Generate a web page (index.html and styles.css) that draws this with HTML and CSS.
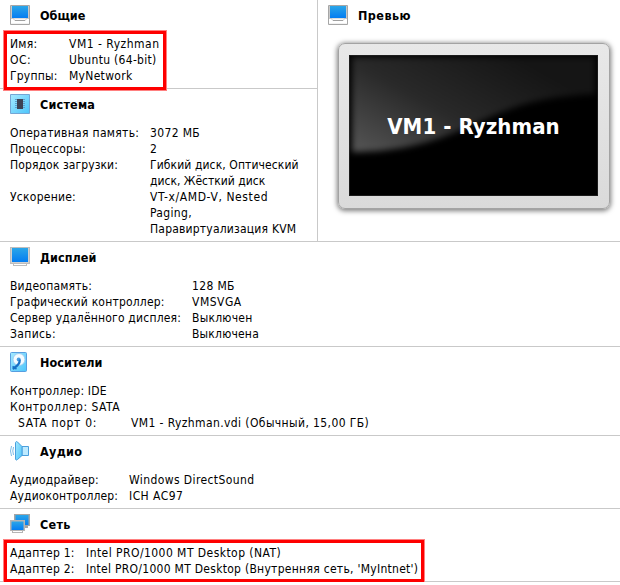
FILE: index.html
```
<!DOCTYPE html>
<html lang="ru">
<head>
<meta charset="utf-8">
<title>VM1 - Ryzhman</title>
<link rel="stylesheet" href="styles.css">
</head>
<body>
<svg class="defs" width="0" height="0" aria-hidden="true">
  <defs>
    <linearGradient id="blue" x1="0" y1="0" x2="0" y2="1"><stop offset="0" stop-color="#2ba6e8"/><stop offset="1" stop-color="#047df2"/></linearGradient>
    <linearGradient id="cyan" x1="0" y1="0" x2="1" y2="1"><stop offset="0" stop-color="#a5e9ff"/><stop offset="1" stop-color="#4cc5fb"/></linearGradient>
    <symbol id="computer" viewBox="0 0 20 20">
      <path d="M.5.5h19v19H.5z" fill="#f2f2f2" stroke="#a6a6a6"/>
      <path d="M1 1h18v13H1z" fill="#c9c9c9"/>
      <path d="M2 1h16v12H2z" fill="url(#blue)"/>
      <path d="M1 14h18v4H1z" fill="#fff"/>
      <path d="M4 13.5h12v1H4z" fill="#eee"/>
      <path d="M4 14.5l1 1h10l1-1" fill="none" stroke="#a0a0a0"/>
    </symbol>
    <symbol id="monitor" viewBox="0 0 20 20">
      <path d="M0 0h20v17h-3v2H3v-2H0z" fill="#bdbdbd"/>
      <path d="M1 1h18v15H1z" fill="#d0d0d0"/>
      <path d="M2 1h16v14H2z" fill="url(#blue)"/>
      <path d="M4 17h12v1H4z" fill="#fff"/>
    </symbol>
  </defs>
</svg>

<main class="details">
  <div class="top">
    <div class="left">
      <section class="section first c59">
        <h2 class="head"><svg class="icon"><use href="#computer"/></svg><span>Общие</span></h2>
        <dl class="rows boxed box-name">
          <dt class="s30">Имя:</dt><dd class="s50">VM1 - Ryzhman</dd>
          <dt class="s50">ОС:</dt><dd class="s30">Ubuntu (64-bit)</dd>
          <dt class="s20">Группы:</dt><dd class="s30">MyNetwork</dd>
        </dl>
      </section>
      <section class="section c140">
        <h2 class="head s20"><svg class="icon" viewBox="0 0 20 20">
          <path d="M.5.5h19v19H.5z" fill="url(#cyan)" stroke="#74a6d5"/>
          <path d="M5 5.500h10M5 7.500h10M5 9.500h10M5 11.500h10M5 13.500h10" stroke="#5d9dc8"/>
          <path d="M7 5h6v10H7z" fill="#3d4254"/>
        </svg><span>Система</span></h2>
        <dl class="rows">
          <dt class="s30">Оперативная память:</dt><dd class="s35">3072 МБ</dd>
          <dt class="s25">Процессоры:</dt><dd>2</dd>
          <dt class="s10">Порядок загрузки:</dt><dd><span class="s10">Гибкий диск, Оптический</span><br>диск, Жёсткий диск</dd>
          <dt class="s25">Ускорение:</dt><dd><span class="s60">VT-x/AMD-V, Nested</span><br><span class="s35">Paging,</span><br><span class="s20">Паравиртуализация KVM</span></dd>
        </dl>
      </section>
    </div>
    <section class="section first preview">
      <h2 class="head s45"><svg class="icon"><use href="#computer"/></svg><span>Превью</span></h2>
      <div class="frame">
        <div class="screen">
          <svg class="glare" viewBox="0 0 249 141">
            <defs>
              <linearGradient id="shine" gradientUnits="userSpaceOnUse" x1="10" y1="97" x2="88" y2="-42"><stop offset="0" stop-color="#545454"/><stop offset=".48" stop-color="#292929"/><stop offset="1" stop-color="#151515"/></linearGradient>
              <filter id="soft" x="-10%" y="-10%" width="120%" height="120%" color-interpolation-filters="sRGB"><feGaussianBlur stdDeviation="3"/></filter>
            </defs>
            <path d="M3 2H246V39C185 42 160 53 121 71C81 89 47 97 3 97z" fill="url(#shine)" filter="url(#soft)"/>
          </svg>
          <span class="screen-name">VM1 - Ryzhman</span>
        </div>
      </div>
    </section>
  </div>

  <section class="section c182">
    <h2 class="head s05"><svg class="icon"><use href="#monitor"/></svg><span>Дисплей</span></h2>
    <dl class="rows">
      <dt class="s20">Видеопамять:</dt><dd class="s35">128 МБ</dd>
      <dt class="s20">Графический контроллер:</dt><dd class="s50">VMSVGA</dd>
      <dt class="s20">Сервер удалённого дисплея:</dt><dd class="s25">Выключен</dd>
      <dt class="s35">Запись:</dt><dd class="s20">Выключена</dd>
    </dl>
  </section>

  <section class="section c121">
    <h2 class="head s05"><svg class="icon" viewBox="0 0 20 20">
      <rect x=".5" y=".5" width="16" height="19" rx="1" fill="url(#cyan)" stroke="#579ee0"/>
      <circle cx="9" cy="7.500" r="6" fill="#f4fbff" stroke="#9bcdf2"/>
      <circle cx="8.700" cy="7.500" r="2" fill="#4b9fe2"/>
      <path d="M9.700 8.500C10 12 6.500 14.500 3.500 16.500" fill="none" stroke="#1770c6" stroke-width="2.200" stroke-linecap="round"/>
      <path d="M2.500 14.500l4 2.500" stroke="#1770c6" stroke-width="1.500"/>
    </svg><span>Носители</span></h2>
    <dl class="rows">
      <dt class="wide s20">Контроллер: IDE</dt>
      <dt class="wide s50">Контроллер: SATA</dt>
      <dt class="sub s70">SATA порт 0:</dt><dd class="s40">VM1 - Ryzhman.vdi (Обычный, 15,00 ГБ)</dd>
    </dl>
  </section>

  <section class="section c119">
    <h2 class="head s30"><svg class="icon" viewBox="0 0 20 20">
      <path d="M12 5.500h6.500v9H12z" fill="#bdeaff" stroke="#4a9fdd"/>
      <path d="M5.500 1.500C6 .3 7 .3 7.500 1l4.500 4.500v9L7.500 18.500C6.500 19.500 5.500 19 5.500 18z" fill="url(#cyan)" stroke="#4a9fdd"/>
      <path d="M3.500 6Q2 10 3.500 14M1.500 5Q-.5 10 1.500 15" fill="none" stroke="#7bbbe6"/>
    </svg><span>Аудио</span></h2>
    <dl class="rows">
      <dt class="s20">Аудиодрайвер:</dt><dd class="s40">Windows DirectSound</dd>
      <dt class="s15">Аудиоконтроллер:</dt><dd class="s45">ICH AC97</dd>
    </dl>
  </section>

  <section class="section last c76">
    <h2 class="head s25"><svg class="icon" viewBox="0 0 20 20">
      <path d="M4 0h16v12h-2v2H6v-2H4z" fill="#a5a5a5"/><path d="M5.500 1h13v10h-13z" fill="url(#blue)"/>
      <path d="M0 6h15v11h-2v2H2v-2H0z" fill="#b5b5b5"/><path d="M1.500 7.500h12V16h-12z" fill="url(#blue)"/>
      <path d="M3 17h9v1H3z" fill="#fff"/>
    </svg><span>Сеть</span></h2>
    <dl class="rows boxed box-net">
      <dt class="s25">Адаптер 1:</dt><dd class="s45">Intel PRO/1000 MT Desktop (NAT)</dd>
      <dt class="s25">Адаптер 2:</dt><dd class="s28">Intel PRO/1000 MT Desktop (Внутренняя сеть, 'MyIntnet')</dd>
    </dl>
  </section>
</main>
</body>
</html>
```
FILE: styles.css
```
*, *::after { box-sizing: border-box; }
body {
  margin: 0;
  background: #fff;
  color: #000;
  font: 12px/16px "DejaVu Sans Condensed", "DejaVu Sans", sans-serif;
}
.defs { position: absolute; }
.top { display: grid; grid-template-columns: 318px 1fr; }
.left { border-right: 1px solid #c9c9c9; }
.section { border-top: 1px solid #c9c9c9; padding: 5px 0 4px 10px; }
.section.first { border-top: 0; }
.section.last { border-bottom: 1px solid #c9c9c9; }
.head {
  display: flex;
  align-items: center;
  gap: 10px;
  height: 20px;
  margin: 0 0 11px;
  font-size: 12.5px;
  font-weight: 700;
}
.head span { padding-top: 2px; }
.icon { display: block; width: 20px; height: 20px; }
.rows {
  position: relative;
  display: grid;
  margin: 0;
  white-space: nowrap;
}
dt, dd { margin: 0; }
.wide { grid-column: 1 / -1; }
.sub { padding-left: 8px; }
.c59 .rows { grid-template-columns: 59px 1fr; }
.c76 .rows { grid-template-columns: 76px 1fr; }
.c119 .rows { grid-template-columns: 119px 1fr; }
.c121 .rows { grid-template-columns: 121px 1fr; }
.c140 .rows { grid-template-columns: 140px 1fr; }
.c182 .rows { grid-template-columns: 182px 1fr; }

.s05 { letter-spacing: .05px; }
.s10 { letter-spacing: .1px; }
.s15 { letter-spacing: .15px; }
.s20 { letter-spacing: .2px; }
.s25 { letter-spacing: .25px; }
.s28 { letter-spacing: .28px; }
.s30 { letter-spacing: .3px; }
.s35 { letter-spacing: .35px; }
.s40 { letter-spacing: .4px; }
.s45 { letter-spacing: .45px; }
.s50 { letter-spacing: .5px; }
.s60 { letter-spacing: .6px; }
.s70 { letter-spacing: .7px; }

/* red highlight drawn over the rows */
.boxed::after {
  content: "";
  position: absolute;
  left: -6px;
  border: 3px solid #fe0000;
  box-shadow: 0 0 0 1px #ff8080;
}
.box-name::after { top: -5px; width: 162px; height: 59px; }
.box-net::after { top: -5px; width: 420px; height: 42px; }

.frame {
  width: 272px;
  height: 166px;
  margin: 18px 0 0 10px;
  padding: 11px 0 0 10px;
  border: 1px solid #a3a3a3;
  border-radius: 7px;
  background: linear-gradient(#e8e8e8, #dadada);
  box-shadow: 0 1px 5px 1px rgba(0, 0, 0, .5);
}
.preview .head { margin-bottom: 0; }
.screen {
  display: grid;
  place-items: center;
  width: 249px;
  height: 141px;
  background: #000;
  box-shadow: inset 0 0 0 1px #1b1b1b;
}
.glare, .screen-name { grid-area: 1 / 1; }
.glare { display: block; width: 249px; height: 141px; }
.screen-name {
  padding-top: 3px;
  color: #fff;
  font-size: 22px;
  line-height: 26px;
  font-weight: 700;
  letter-spacing: .07px;
  z-index: 1;
}
```
